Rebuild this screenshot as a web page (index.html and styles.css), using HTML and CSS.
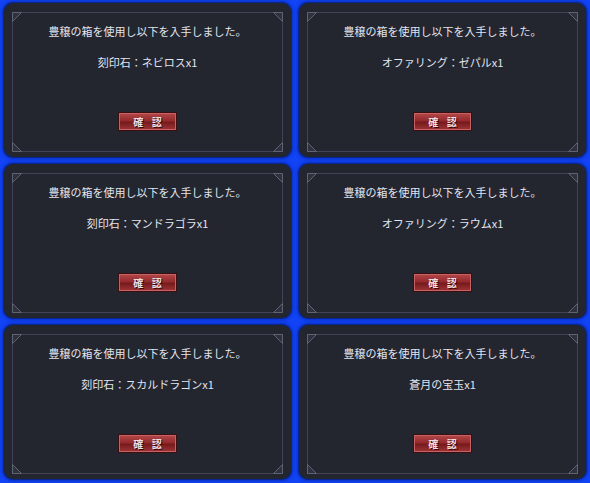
FILE: index.html
```html
<!DOCTYPE html>
<html lang="ja">
<head>
<meta charset="utf-8">
<link rel="stylesheet" href="styles.css">
</head>
<body>
<div class="grid">
  <div class="cell"><div class="panel"><div class="frame">
    <svg class="orn tl" viewBox="0 0 10 10"><polygon points="0.5,0.5 9.5,0.5 0.5,9.5"/></svg>
    <svg class="orn tr" viewBox="0 0 10 10"><polygon points="0.5,0.5 9.5,0.5 9.5,9.5"/></svg>
    <svg class="orn bl" viewBox="0 0 10 10"><polygon points="0.5,0.5 0.5,9.5 9.5,9.5"/></svg>
    <svg class="orn br" viewBox="0 0 10 10"><polygon points="9.5,0.5 9.5,9.5 0.5,9.5"/></svg>
    <p class="msg">豊穣の箱を使用し以下を入手しました。</p>
    <p class="item">刻印石：ネビロスx1</p>
    <div class="btn">確&nbsp;認</div>
  </div></div></div>
  <div class="cell"><div class="panel"><div class="frame">
    <svg class="orn tl" viewBox="0 0 10 10"><polygon points="0.5,0.5 9.5,0.5 0.5,9.5"/></svg>
    <svg class="orn tr" viewBox="0 0 10 10"><polygon points="0.5,0.5 9.5,0.5 9.5,9.5"/></svg>
    <svg class="orn bl" viewBox="0 0 10 10"><polygon points="0.5,0.5 0.5,9.5 9.5,9.5"/></svg>
    <svg class="orn br" viewBox="0 0 10 10"><polygon points="9.5,0.5 9.5,9.5 0.5,9.5"/></svg>
    <p class="msg">豊穣の箱を使用し以下を入手しました。</p>
    <p class="item">オファリング：ゼパルx1</p>
    <div class="btn">確&nbsp;認</div>
  </div></div></div>
  <div class="cell"><div class="panel"><div class="frame">
    <svg class="orn tl" viewBox="0 0 10 10"><polygon points="0.5,0.5 9.5,0.5 0.5,9.5"/></svg>
    <svg class="orn tr" viewBox="0 0 10 10"><polygon points="0.5,0.5 9.5,0.5 9.5,9.5"/></svg>
    <svg class="orn bl" viewBox="0 0 10 10"><polygon points="0.5,0.5 0.5,9.5 9.5,9.5"/></svg>
    <svg class="orn br" viewBox="0 0 10 10"><polygon points="9.5,0.5 9.5,9.5 0.5,9.5"/></svg>
    <p class="msg">豊穣の箱を使用し以下を入手しました。</p>
    <p class="item">刻印石：マンドラゴラx1</p>
    <div class="btn">確&nbsp;認</div>
  </div></div></div>
  <div class="cell"><div class="panel"><div class="frame">
    <svg class="orn tl" viewBox="0 0 10 10"><polygon points="0.5,0.5 9.5,0.5 0.5,9.5"/></svg>
    <svg class="orn tr" viewBox="0 0 10 10"><polygon points="0.5,0.5 9.5,0.5 9.5,9.5"/></svg>
    <svg class="orn bl" viewBox="0 0 10 10"><polygon points="0.5,0.5 0.5,9.5 9.5,9.5"/></svg>
    <svg class="orn br" viewBox="0 0 10 10"><polygon points="9.5,0.5 9.5,9.5 0.5,9.5"/></svg>
    <p class="msg">豊穣の箱を使用し以下を入手しました。</p>
    <p class="item">オファリング：ラウムx1</p>
    <div class="btn">確&nbsp;認</div>
  </div></div></div>
  <div class="cell"><div class="panel"><div class="frame">
    <svg class="orn tl" viewBox="0 0 10 10"><polygon points="0.5,0.5 9.5,0.5 0.5,9.5"/></svg>
    <svg class="orn tr" viewBox="0 0 10 10"><polygon points="0.5,0.5 9.5,0.5 9.5,9.5"/></svg>
    <svg class="orn bl" viewBox="0 0 10 10"><polygon points="0.5,0.5 0.5,9.5 9.5,9.5"/></svg>
    <svg class="orn br" viewBox="0 0 10 10"><polygon points="9.5,0.5 9.5,9.5 0.5,9.5"/></svg>
    <p class="msg">豊穣の箱を使用し以下を入手しました。</p>
    <p class="item">刻印石：スカルドラゴンx1</p>
    <div class="btn">確&nbsp;認</div>
  </div></div></div>
  <div class="cell"><div class="panel"><div class="frame">
    <svg class="orn tl" viewBox="0 0 10 10"><polygon points="0.5,0.5 9.5,0.5 0.5,9.5"/></svg>
    <svg class="orn tr" viewBox="0 0 10 10"><polygon points="0.5,0.5 9.5,0.5 9.5,9.5"/></svg>
    <svg class="orn bl" viewBox="0 0 10 10"><polygon points="0.5,0.5 0.5,9.5 9.5,9.5"/></svg>
    <svg class="orn br" viewBox="0 0 10 10"><polygon points="9.5,0.5 9.5,9.5 0.5,9.5"/></svg>
    <p class="msg">豊穣の箱を使用し以下を入手しました。</p>
    <p class="item">蒼月の宝玉x1</p>
    <div class="btn">確&nbsp;認</div>
  </div></div></div>
</div>
</body>
</html>
```

FILE: styles.css
```css
html, body {
  margin: 0;
  padding: 0;
}
body {
  width: 590px;
  height: 483px;
  overflow: hidden;
  background: #1244f5;
  font-family: "Noto Sans CJK JP", "Noto Sans", sans-serif;
}
.grid {
  display: grid;
  grid-template-columns: 295px 295px;
  grid-template-rows: 161px 161px 161px;
}
.cell {
  padding: 3px 4px 4px 4px;
  box-sizing: border-box;
}
.panel {
  height: 100%;
  box-sizing: border-box;
  background: #23252f;
  border-radius: 9px;
  box-shadow: 0 0 0 1px #0a2590, 0 0 3px 2px #0830c0;
  padding: 9px 8px 5px 8px;
}
.frame {
  position: relative;
  height: 100%;
  box-sizing: border-box;
  border: 1px solid #414456;
  display: flex;
  flex-direction: column;
  align-items: center;
  padding-top: 11px;
}
.orn {
  position: absolute;
  width: 10px;
  height: 10px;
}
.orn polygon {
  fill: #2e3140;
  stroke: #5f6372;
  stroke-width: 1;
}
.tl { top: -1px; left: -1px; }
.tr { top: -1px; right: -1px; }
.bl { bottom: -1px; left: -1px; }
.br { bottom: -1px; right: -1px; }
.msg, .item {
  margin: 0;
  font-size: 11px;
  line-height: 14px;
  color: #e2e6f0;
}
.item {
  margin-top: 17px;
}
.btn {
  margin-top: 44px;
  width: 57px;
  height: 17px;
  box-sizing: border-box;
  border: 1px solid #c86262;
  outline: 1px solid #3a0f12;
  background: linear-gradient(#b04446 0%, #942a2c 45%, #761a1c 55%, #9a3234 100%);
  color: #f2dfe2;
  font-size: 10px;
  font-weight: bold;
  line-height: 15px;
  text-align: center;
  letter-spacing: 3px;
  text-indent: 3px;
  text-shadow: 1px 1px 0 #3a0808;
}
```
